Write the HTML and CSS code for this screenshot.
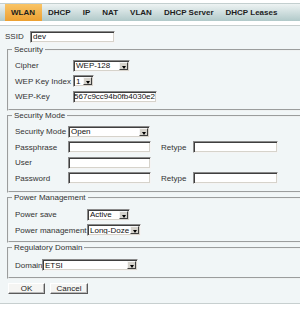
FILE: index.html
```html
<!DOCTYPE html>
<html>
<head>
<meta charset="utf-8">
<link rel="stylesheet" href="styles.css">
</head>
<body>
<div class="tabs">
  <span class="tab active">WLAN</span>
  <span class="tab">DHCP</span>
  <span class="tab">IP</span>
  <span class="tab">NAT</span>
  <span class="tab">VLAN</span>
  <span class="tab">DHCP Server</span>
  <span class="tab">DHCP Leases</span>
</div>
<div class="content">
  <div class="ssid">
    <span class="lbl-ssid">SSID</span>
    <span class="inp w-ssid">dev</span>
  </div>

  <fieldset class="fs fs-sec">
    <legend>Security</legend>
    <div class="row">
      <span class="lbl">Cipher</span>
      <span class="sel w-cipher"><span class="val">WEP-128</span><span class="arr"></span></span>
    </div>
    <div class="row">
      <span class="lbl">WEP Key Index</span>
      <span class="sel w-idx"><span class="val">1</span><span class="arr"></span></span>
    </div>
    <div class="row">
      <span class="lbl">WEP-Key</span>
      <span class="inp w-key scrolled"><span class="txt">9567c9cc94b0fb4030e2</span></span>
    </div>
  </fieldset>

  <fieldset class="fs fs-mode">
    <legend>Security Mode</legend>
    <div class="row">
      <span class="lbl">Security Mode</span>
      <span class="sel w-mode"><span class="val">Open</span><span class="arr"></span></span>
    </div>
    <div class="row">
      <span class="lbl">Passphrase</span>
      <span class="inp w-pass"></span>
      <span class="lbl-re">Retype</span>
      <span class="inp w-re"></span>
    </div>
    <div class="row">
      <span class="lbl">User</span>
      <span class="inp w-pass"></span>
    </div>
    <div class="row">
      <span class="lbl">Password</span>
      <span class="inp w-pass"></span>
      <span class="lbl-re">Retype</span>
      <span class="inp w-re"></span>
    </div>
  </fieldset>

  <fieldset class="fs fs-power">
    <legend>Power Management</legend>
    <div class="row">
      <span class="lbl">Power save</span>
      <span class="sel w-ps"><span class="val">Active</span><span class="arr"></span></span>
    </div>
    <div class="row">
      <span class="lbl">Power management</span>
      <span class="sel w-pm"><span class="val">Long-Doze</span><span class="arr"></span></span>
    </div>
  </fieldset>

  <fieldset class="fs fs-reg">
    <legend>Regulatory Domain</legend>
    <div class="row">
      <span class="lbl">Domain</span>
      <span class="sel w-dom"><span class="val">ETSI</span><span class="arr"></span></span>
    </div>
  </fieldset>

  <div class="buttons">
    <span class="btn w-ok">OK</span>
    <span class="btn w-cancel">Cancel</span>
  </div>
</div>
</body>
</html>
```

FILE: styles.css
```css
html, body {
  margin: 0;
  padding: 0;
  overflow: hidden;
  background: #ffffff;
}
body {
  width: 300px;
  height: 312px;
  font-family: "Liberation Sans", Arial, sans-serif;
  font-size: 8px;
  color: #333333;
}

/* Tab bar */
.tabs {
  margin-top: 3px;
  height: 17px;
  border-top: 1px solid #c3cfcf;
  background: linear-gradient(#edf3f3, #b1c9c9);
  display: flex;
  align-items: stretch;
  padding-left: 5px;
}
.tab {
  display: flex;
  align-items: center;
  padding: 0 6px;
  font-weight: bold;
  color: #1d1d1d;
}
.tab.active {
  padding-right: 7px;
  background: linear-gradient(#f9c466, #eca031);
}

/* Content panel */
.content {
  margin-top: 4px;
  border-top: 1px solid #c7cfcf;
  border-bottom: 1px solid #c7cfcf;
  background: #f1f6f7;
  height: 273px;
  padding: 4px 0 0 5px;
  overflow: hidden;
}

.ssid {
  display: flex;
  align-items: center;
  height: 13px;
}
.lbl-ssid {
  width: 25px;
}
.w-ssid { width: 85px; height: 13px; }

/* Fieldsets */
.fs {
  margin: 2px -8px 0 2px;
  padding: 3px 6px 4.5px 6px;
  border: 2px groove #eef1f1;
  min-width: 0;
}
.fs + .fs { margin-top: 0; }
.fs-power { padding-top: 4.5px; padding-bottom: 3px; }
.fs-reg { padding-top: 4.5px; padding-bottom: 4px; }
legend {
  margin-left: -3px;
  padding: 0 2px;
  line-height: 10px;
  color: #333;
}

.row {
  display: flex;
  align-items: center;
  height: 15.5px;
}
.fs-sec .lbl { width: 58px; }
.fs-mode .lbl { width: 53px; }
.fs-power .lbl { width: 72px; }
.fs-reg .lbl { width: 27px; }
.lbl-re {
  margin-left: 10px;
  width: 32px;
}

/* Text inputs */
.inp {
  box-sizing: border-box;
  display: flex;
  align-items: center;
  height: 12px;
  padding-left: 2px;
  background: #ffffff;
  border: 1px solid;
  border-color: #8a8a8a #f4f4f4 #f4f4f4 #8a8a8a;
  box-shadow: inset 1px 1px 0 #3f3f3f, inset -1px -1px 0 #d6d3cb;
  color: #111;
  white-space: nowrap;
  overflow: hidden;
}
.inp.scrolled {
  justify-content: flex-end;
  padding-left: 0;
  padding-right: 1px;
}
.txt { flex: none; }

.w-key { width: 84px; }
.w-pass { width: 83px; }
.w-re { width: 85px; }

/* Select boxes */
.sel {
  box-sizing: border-box;
  display: flex;
  align-items: stretch;
  height: 12px;
  background: #ffffff;
  border: 1px solid;
  border-color: #8a8a8a #f4f4f4 #f4f4f4 #8a8a8a;
  box-shadow: inset 1px 1px 0 #3f3f3f, inset -1px -1px 0 #d6d3cb;
  padding: 1px;
  color: #111;
}
.val {
  flex: 1;
  display: flex;
  align-items: center;
  padding-left: 1px;
  white-space: nowrap;
  overflow: hidden;
}
.arr {
  box-sizing: border-box;
  position: relative;
  width: 9px;
  flex: none;
  background: #d6d3cc;
  border: 1px solid;
  border-color: #f6f6f6 #404040 #404040 #f6f6f6;
}
.arr::after {
  content: "";
  position: absolute;
  left: 1.5px;
  top: 3px;
  border-left: 2.5px solid transparent;
  border-right: 2.5px solid transparent;
  border-top: 3px solid #000;
}

.w-cipher { width: 57px; }
.w-idx { width: 21px; }
.w-mode { width: 82px; }
.w-ps { width: 43px; }
.w-pm { width: 54px; }
.w-dom { width: 96px; }

/* Buttons */
.buttons {
  display: flex;
  gap: 5px;
  margin: 4px 0 0 3px;
}
.btn {
  box-sizing: border-box;
  display: flex;
  align-items: center;
  justify-content: center;
  height: 11px;
  background: #f5f5f3;
  border: 1px solid;
  border-color: #ffffff #5a5a5a #5a5a5a #ffffff;
  box-shadow: inset -1px -1px 0 #b9b9b9;
  color: #222;
}
.w-ok { width: 37px; }
.w-cancel { width: 38px; }
```
